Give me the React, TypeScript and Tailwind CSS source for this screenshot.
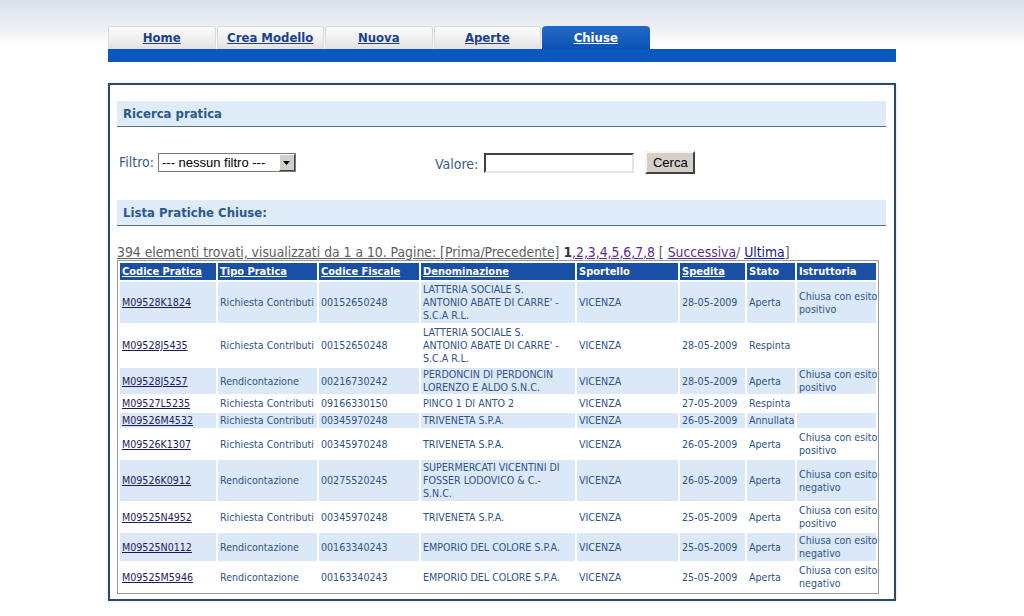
const tabs = ["Home", "Crea Modello", "Nuova", "Aperte", "Chiuse"];

type Row = {
  code: string;
  tipo: string;
  cf: string;
  den: string[];
  stato: string;
  data: string;
  istr: string[];
};

const rows: Row[] = [
  { code: "M09528K1824", tipo: "Richiesta Contributi", cf: "00152650248", den: ["LATTERIA SOCIALE S.", "ANTONIO ABATE DI CARRE' -", "S.C.A R.L."], data: "28-05-2009", stato: "Aperta", istr: ["Chiusa con esito", "positivo"] },
  { code: "M09528J5435", tipo: "Richiesta Contributi", cf: "00152650248", den: ["LATTERIA SOCIALE S.", "ANTONIO ABATE DI CARRE' -", "S.C.A R.L."], data: "28-05-2009", stato: "Respinta", istr: [] },
  { code: "M09528J5257", tipo: "Rendicontazione", cf: "00216730242", den: ["PERDONCIN DI PERDONCIN", "LORENZO E ALDO S.N.C."], data: "28-05-2009", stato: "Aperta", istr: ["Chiusa con esito", "positivo"] },
  { code: "M09527L5235", tipo: "Richiesta Contributi", cf: "09166330150", den: ["PINCO 1 DI ANTO 2"], data: "27-05-2009", stato: "Respinta", istr: [] },
  { code: "M09526M4532", tipo: "Richiesta Contributi", cf: "00345970248", den: ["TRIVENETA S.P.A."], data: "26-05-2009", stato: "Annullata", istr: [] },
  { code: "M09526K1307", tipo: "Richiesta Contributi", cf: "00345970248", den: ["TRIVENETA S.P.A."], data: "26-05-2009", stato: "Aperta", istr: ["Chiusa con esito", "positivo"] },
  { code: "M09526K0912", tipo: "Rendicontazione", cf: "00275520245", den: ["SUPERMERCATI VICENTINI DI", "FOSSER LODOVICO & C.-", "S.N.C."], data: "26-05-2009", stato: "Aperta", istr: ["Chiusa con esito", "negativo"] },
  { code: "M09525N4952", tipo: "Richiesta Contributi", cf: "00345970248", den: ["TRIVENETA S.P.A."], data: "25-05-2009", stato: "Aperta", istr: ["Chiusa con esito", "positivo"] },
  { code: "M09525N0112", tipo: "Rendicontazione", cf: "00163340243", den: ["EMPORIO DEL COLORE S.P.A."], data: "25-05-2009", stato: "Aperta", istr: ["Chiusa con esito", "negativo"] },
  { code: "M09525M5946", tipo: "Rendicontazione", cf: "00163340243", den: ["EMPORIO DEL COLORE S.P.A."], data: "25-05-2009", stato: "Aperta", istr: ["Chiusa con esito", "negativo"] },
];

const headers = [
  { label: "Codice Pratica", link: true },
  { label: "Tipo Pratica", link: true },
  { label: "Codice Fiscale", link: true },
  { label: "Denominazione", link: true },
  { label: "Sportello", link: false },
  { label: "Spedita", link: true },
  { label: "Stato", link: false },
  { label: "Istruttoria", link: false },
];

const Lines = ({ lines }: { lines: string[] }) => (
  <>
    {lines.map((l, i) => (
      <span key={i} className="block whitespace-nowrap">
        {l}
      </span>
    ))}
  </>
);

const SectionTitle = ({ title }: { title: string }) => (
  <div className="h-[26px] bg-[#deebf8] border-b border-[#56708a] flex items-center pl-[6px] text-[13px] font-bold text-[#2a5a8b]">
    {title}
  </div>
);

const App = () => {
  return (
    <div className="min-h-[616px] bg-[linear-gradient(to_bottom,#d8e0e9_0px,#eef2f6_30px,#ffffff_46px)] font-['DejaVu_Sans_Condensed','DejaVu_Sans',sans-serif]">
      <div className="ml-[108px] w-[788px] pt-[26px]">
        {/* Tabs */}
        <div className="flex gap-px h-[23px]">
          {tabs.map((t) => {
            const active = t === "Chiuse";
            return (
              <div
                key={t}
                className={
                  active
                    ? "w-[107.5px] rounded-t-[4px] bg-[linear-gradient(to_bottom,#2469c6,#0b53b3)] flex items-center justify-center text-[13px] font-bold text-white underline"
                    : "w-[107.5px] rounded-t-[3px] border border-b-0 border-[#dadada] bg-[linear-gradient(to_bottom,#fdfdfd,#ebebeb_70%,#e0e0e0)] flex items-center justify-center text-[13px] font-bold text-[#1c3f8e] underline"
                }
              >
                {t}
              </div>
            );
          })}
        </div>
        <div className="h-[13px] bg-[#0a58bb]" />

        {/* Box */}
        <div className="mt-[21px] border-2 border-[#2c4a64] bg-white pl-[7px] pr-[8px] pt-[16px] pb-[5px] shadow-[0_0_3px_#cfe0f0]">
          <SectionTitle title="Ricerca pratica" />

          <div className="mt-[24px] flex items-center h-[23px] text-[14px] text-[#3a5d8c]">
            <span className="pl-[2px] mr-[4px]">Filtro:</span>
            <div className="w-[138px] h-[19px] border border-[#7b7b7b] bg-white flex items-stretch">
              <span className="flex-1 pl-[3px] text-[13px] leading-[17px] text-black font-['Liberation_Sans',sans-serif]">
                --- nessun filtro ---
              </span>
              <span className="w-[16px] bg-[#d4d0c8] border border-t-white border-l-white border-b-[#404040] border-r-[#404040] flex items-center justify-center">
                <svg width="7" height="4" viewBox="0 0 7 4">
                  <path d="M0 0h7L3.5 4z" fill="#000" />
                </svg>
              </span>
            </div>
            <span className="ml-[139px] mt-[4px] mr-[6px]">Valore:</span>
            <div className="mt-[1px] w-[150px] h-[20px] bg-white border-2 border-t-[#404040] border-l-[#404040] border-b-[#e4e4e4] border-r-[#e4e4e4]" />
            <div className="ml-[11px] w-[50px] h-[23px] bg-[#d4d0c8] border-2 border-t-[#f4f4f4] border-l-[#f4f4f4] border-b-[#404040] border-r-[#404040] flex items-center justify-center text-[13px] text-black font-['Liberation_Sans',sans-serif]">
              Cerca
            </div>
          </div>

          <div className="mt-[26px]">
            <SectionTitle title="Lista Pratiche Chiuse:" />
          </div>

          <div className="mt-[18px] text-[13.8px] leading-[16px] text-[#5e5e5e] whitespace-nowrap">
            <span className="underline">394 elementi trovati, visualizzati da 1 a 10. Pagine: [Prima/Precedente]</span>{" "}
            <b className="text-[#333]">1</b>
            <span className="text-[#5b2d8c] underline">,2,3,4,5,6,7,8</span> [{" "}
            <span className="text-[#5b2d8c] underline">Successiva</span>/{" "}
            <span className="text-[#1b1b8c] underline">Ultima</span>]
          </div>

          <table className="w-[762px] table-fixed border-separate border-spacing-[2px] border border-[#9a9a9a] text-[10.6px] leading-[13px]">
            <colgroup>
              <col className="w-[96px]" />
              <col className="w-[99px]" />
              <col className="w-[100px]" />
              <col className="w-[154px]" />
              <col className="w-[101px]" />
              <col className="w-[65px]" />
              <col className="w-[48px]" />
              <col />
            </colgroup>
            <thead>
              <tr>
                {headers.map((h) => (
                  <th
                    key={h.label}
                    className={`h-[17px] bg-[#1a4fa6] text-left px-[2px] font-bold text-[11px] text-white whitespace-nowrap ${h.link ? "underline" : ""}`}
                  >
                    {h.label}
                  </th>
                ))}
              </tr>
            </thead>
            <tbody>
              {rows.map((r, i) => {
                const bg = i % 2 === 0 ? "bg-[#dbe8f8]" : "bg-white";
                const pad = r.den.length === 2 ? "py-0" : "py-px";
                const td = `${bg} px-[2px] ${pad} text-[#2f5487] whitespace-nowrap`;
                return (
                  <tr key={r.code}>
                    <td className={td}>
                      <span className="text-[#1b1b5e] underline">{r.code}</span>
                    </td>
                    <td className={td}>{r.tipo}</td>
                    <td className={td}>{r.cf}</td>
                    <td className={td}>
                      <Lines lines={r.den} />
                    </td>
                    <td className={td}>VICENZA</td>
                    <td className={td}>{r.data}</td>
                    <td className={td}>{r.stato}</td>
                    <td className={td}>
                      <Lines lines={r.istr} />
                    </td>
                  </tr>
                );
              })}
            </tbody>
          </table>
        </div>
      </div>
    </div>
  );
};

export default App;
